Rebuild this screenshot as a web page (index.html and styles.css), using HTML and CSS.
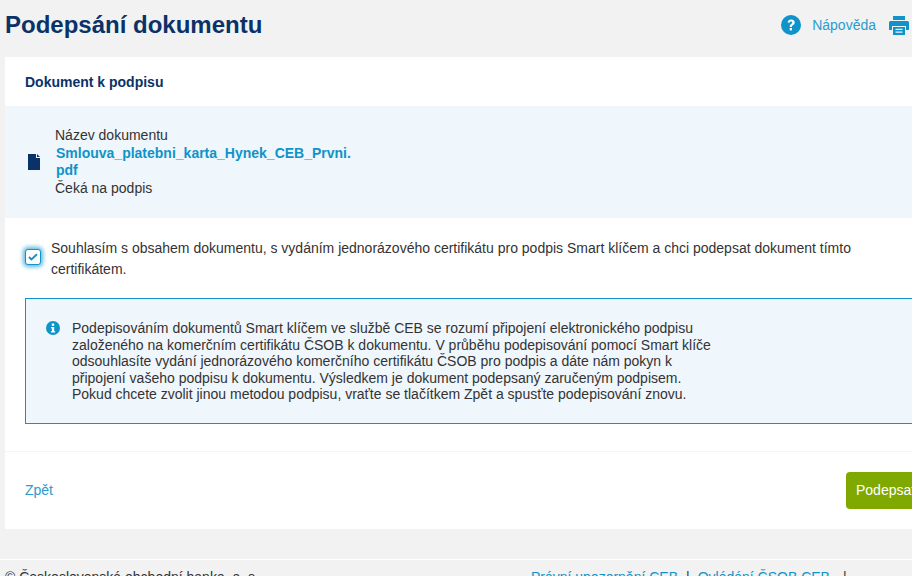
FILE: index.html
```html
<!DOCTYPE html>
<html lang="cs">
<head>
<meta charset="utf-8">
<title>Podepsání dokumentu</title>
<link rel="stylesheet" href="styles.css">
</head>
<body>
<div class="page">
  <header class="head">
    <h1 class="title">Podepsání dokumentu</h1>
    <div class="tools">
      <svg class="ico-help" viewBox="0 0 20 20" width="20" height="20"><circle cx="10" cy="10" r="10" fill="#0f93c9"/><path d="M6.600 7.600C6.800 5.600 8.200 4.400 10.200 4.400c2 0 3.500 1.200 3.500 3 0 1.400-.8 2.100-1.800 2.800-.8.5-1 .9-1 1.800H8.700c0-1.600.4-2.300 1.400-3 .8-.5 1.200-.9 1.200-1.500 0-.7-.5-1.100-1.200-1.100-.8 0-1.300.5-1.400 1.400z" fill="#fff"/><rect x="8.700" y="13" width="2.300" height="2.400" fill="#fff"/></svg>
      <a class="help">Nápověda</a>
      <svg class="ico-print" viewBox="0 0 20 20" width="20" height="20"><path d="M4 1h12v4H4zM1.500 6h17a1.500 1.500 0 0 1 1.500 1.500V15h-3v-4H3v4H0V7.500A1.500 1.500 0 0 1 1.500 6z" fill="#0f93c9"/><path d="M4 12h12v8H4z" fill="#0f93c9"/><path d="M6.500 13.800h7v1.200h-7zM6.500 16.500h7v1.200h-7z" fill="#f2f2f2"/></svg>
    </div>
  </header>
  <main class="card">
    <h2 class="card-title">Dokument k podpisu</h2>
    <section class="doc">
      <svg class="ico-doc" viewBox="0 0 12 16" width="12" height="16"><path d="M0 0h8v4h4v12H0zM9 0l3 3H9z" fill="#0a3268"/></svg>
      <div class="doc-text">
        <div>Název dokumentu</div>
        <a class="doc-link">Smlouva_platebni_karta_Hynek_CEB_Prvni.<br>pdf</a>
        <div>Čeká na podpis</div>
      </div>
    </section>
    <section class="consent">
      <span class="check"><svg viewBox="0 0 12 10" width="10" height="8"><path d="M1 5l3 3 7-6.500" fill="none" stroke="#0f93c9" stroke-width="2.400"/></svg></span>
      <p class="consent-text">Souhlasím s obsahem dokumentu, s vydáním jednorázového certifikátu pro podpis Smart klíčem a chci podepsat dokument tímto certifikátem.</p>
    </section>
    <section class="info">
      <svg class="ico-info" viewBox="0 0 14 14" width="14" height="14"><circle cx="7" cy="7" r="7" fill="#0f93c9"/><rect x="5.800" y="2.500" width="2.400" height="2.300" fill="#fff"/><path d="M5 6h3.200v4.200H9.200v1.300H4.900v-1.300h1v-2.900H5z" fill="#fff"/></svg>
      <p class="info-text">Podepisováním dokumentů Smart klíčem ve službě CEB se rozumí připojení elektronického podpisu založeného na komerčním certifikátu ČSOB k dokumentu. V průběhu podepisování pomocí Smart klíče odsouhlasíte vydání jednorázového komerčního certifikátu ČSOB pro podpis a dáte nám pokyn k připojení vašeho podpisu k dokumentu. Výsledkem je dokument podepsaný zaručeným podpisem. Pokud chcete zvolit jinou metodou podpisu, vraťte se tlačítkem Zpět a spusťte podepisování znovu.</p>
    </section>
    <footer class="actions">
      <a class="back">Zpět</a>
      <button class="submit">Podepsat</button>
    </footer>
  </main>
  <footer class="foot">
    <span class="copy">© Československá obchodní banka, a. s.</span>
    <span class="links"><a>Právní upozornění CEB</a><span>|</span><a>Ovládání ČSOB CEB</a><span class="sep-end">|</span></span>
  </footer>
</div>
</body>
</html>
```
FILE: styles.css
```css
html, body { margin: 0; padding: 0; height: 100%; overflow: hidden; }
body { background: #f2f2f2; font-family: "Liberation Sans", Arial, sans-serif; color: #333; font-size: 14px; }
.page { width: 940px; }
.head { display: flex; justify-content: space-between; align-items: center; height: 57px; padding: 0 12px 8px 5px; box-sizing: border-box; }
.title { margin: 0; font-size: 24px; line-height: 48px; font-weight: 700; color: #0a3268; }
.tools { display: flex; align-items: center; }
.help { color: #2a9bd0; font-size: 14px; margin: 0 13px 0 11px; }
.ico-print { margin-right: 19px; }
.card { margin-left: 5px; background: #fff; height: 472px; width: 935px; }
.card-title { margin: 0; padding: 0 20px; height: 49px; line-height: 50px; font-size: 14px; font-weight: 700; color: #0a3268; }
.doc { background: #eff6fc; height: 112px; display: flex; align-items: center; padding-left: 23px; box-sizing: border-box; }
.ico-doc { margin-right: 15px; }
.doc-text { line-height: 17.500px; width: 310px; }
.doc-link { display: block; color: #0f93c9; font-weight: 700; margin-left: 1px; }
.consent { display: flex; padding: 20px 0 0 20px; height: 80px; box-sizing: border-box; }
.check { width: 14px; height: 14px; margin: 11px 10px 0 0; border: 1px solid #0f93c9; border-radius: 3px; box-shadow: 0 0 4px 2px #5cb8dc; display: flex; align-items: center; justify-content: center; background: #fff; flex: none; }
.consent-text { margin: 0; width: 812px; line-height: 21px; }
.info { margin-left: 20px; width: 895px; height: 126px; box-sizing: border-box; border: 1px solid #0f93c9; background: #eff6fc; display: flex; padding: 21px 0 0 20px; }
.ico-info { margin: 1px 12px 0 0; flex: none; }
.info-text { margin: 0; width: 645px; font-size: 14px; line-height: 16.500px; }
.actions { margin-top: 27px; border-top: 1px solid #f5f5f5; height: 76px; display: flex; align-items: center; justify-content: space-between; padding: 0 0 2px 20px; }
.back { color: #2a9bd0; font-size: 14px; }
.submit { width: 94px; height: 37px; background: #80a900; border: 0; border-radius: 4px; color: #fff; font: 14px "Liberation Sans", Arial, sans-serif; text-align: left; padding: 0 0 0 10px; white-space: nowrap; }
.foot { margin-top: 30px; border-top: 1px solid #fff; display: flex; padding: 9px 0 0 5px; font-size: 14px; }
.links { margin-left: 272px; white-space: nowrap; display: flex; gap: 8px; }
.links a { color: #0f93c9; }
.sep-end { margin-left: 5px; }
```
